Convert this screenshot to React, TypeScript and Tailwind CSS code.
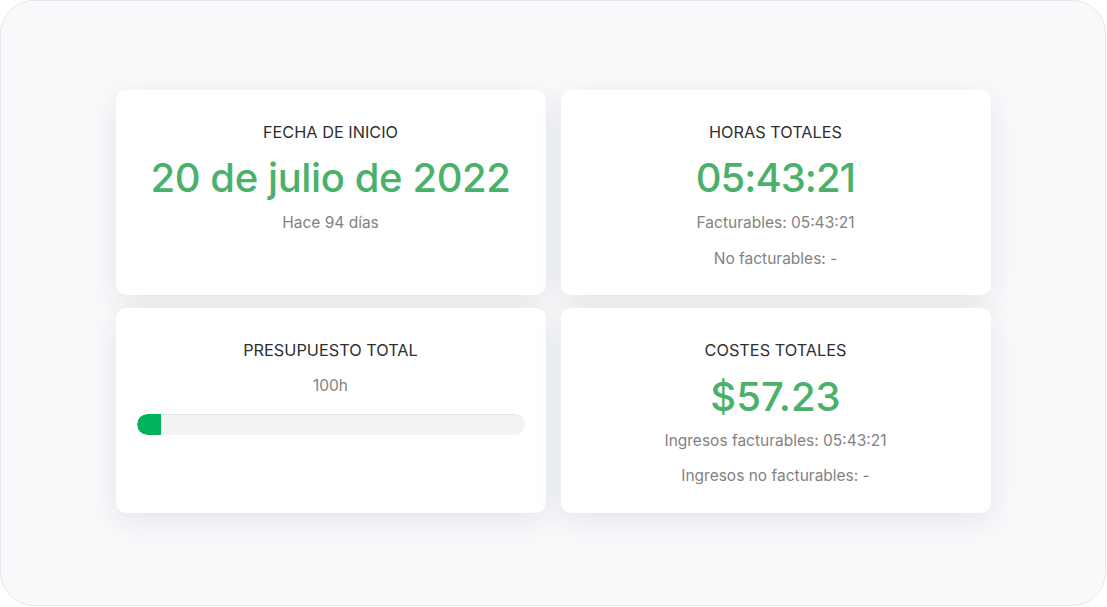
import React from "react";

const font = { fontFamily: "Inter, 'Noto Sans', sans-serif" };

function Card({ children }: { children: React.ReactNode }) {
  return (
    <div className="h-[205px] rounded-[10px] bg-white shadow-[0_8px_28px_rgba(30,40,60,0.09)] flex flex-col items-center pt-[30px]">
      {children}
    </div>
  );
}

function Title({ children }: { children: React.ReactNode }) {
  return <div className="text-[16.3px] leading-[24px] text-[#2f2f2f]">{children}</div>;
}

function Big({ children, className = "" }: { children: React.ReactNode; className?: string }) {
  return (
    <div className={`mt-[12px] text-[40px] leading-[44px] font-[460] text-[#4bb16a] ${className}`}>
      {children}
    </div>
  );
}

function Sub({ children, className = "" }: { children: React.ReactNode; className?: string }) {
  return <div className={`text-[15.5px] leading-[22px] text-[#828282] ${className}`}>{children}</div>;
}

export default function App() {
  return (
    <div style={font} className="w-[1107px] h-[607px] bg-white">
      <div className="w-[1106px] h-[606px] rounded-[34px] border border-[#e4e6ea] bg-[#f8f9fb] flex justify-center pt-[89px]">
        <div className="grid grid-cols-[430px_430px] gap-x-[15px] gap-y-[13px] h-fit">
          <Card>
            <Title>FECHA DE INICIO</Title>
            <Big className="tracking-[-0.4px]">20 de julio de 2022</Big>
            <Sub className="mt-[12px]">Hace 94 días</Sub>
          </Card>
          <Card>
            <Title>HORAS TOTALES</Title>
            <Big className="tracking-[-1px]">05:43:21</Big>
            <Sub className="mt-[12px]">Facturables: 05:43:21</Sub>
            <Sub className="mt-[14px]">No facturables: -</Sub>
          </Card>
          <Card>
            <Title>PRESUPUESTO TOTAL</Title>
            <Sub className="mt-[13px]">100h</Sub>
            <div className="mt-[17px] w-[388px] h-[21px] rounded-full bg-[#f3f3f3] shadow-[inset_0_1px_1px_rgba(0,0,0,0.06)] overflow-hidden">
              <div className="h-full w-[24px] bg-[#00b35a] rounded-l-full" />
            </div>
          </Card>
          <Card>
            <Title>COSTES TOTALES</Title>
            <Big className="mt-[13px]">$57.23</Big>
            <Sub className="mt-[11px]">Ingresos facturables: 05:43:21</Sub>
            <Sub className="mt-[13px]">Ingresos no facturables: -</Sub>
          </Card>
        </div>
      </div>
    </div>
  );
}
